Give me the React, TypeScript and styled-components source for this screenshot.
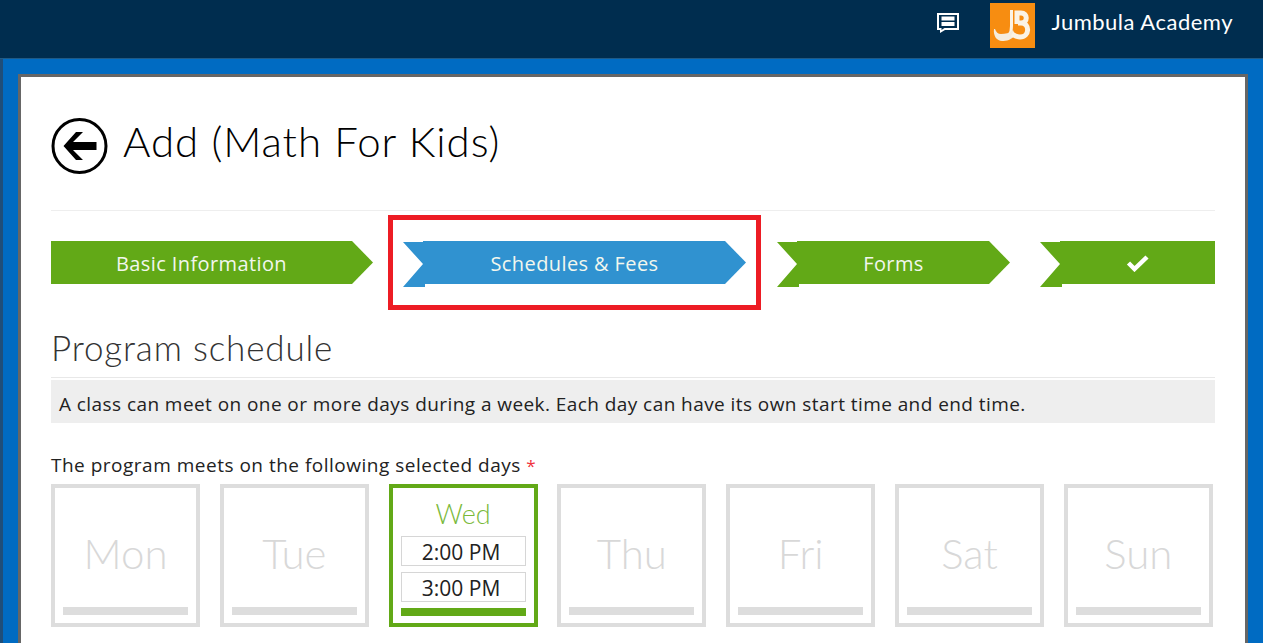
import React from "react";
import styled, { createGlobalStyle } from "styled-components";

const Global = createGlobalStyle`
  html, body { margin: 0; padding: 0; height: 643px; overflow: hidden; background: #006bc2; }
  * { box-sizing: border-box; }
  body { font-family: "Open Sans", "Liberation Sans", sans-serif; color: #222; }
`;
const Page = styled.div`
  width: 1263px;
  height: 643px;
  overflow: hidden;
  display: flex;
  flex-direction: column;
`;
const TopBar = styled.header`
  height: 59px;
  flex: none;
  background: #002d4f;
  border-bottom: 1px solid #1f5a86;
  display: flex;
  align-items: flex-start;
  justify-content: flex-end;
  padding: 3px 30px 0 0;
`;
const ChatButton = styled.span`
  display: flex;
  width: 24px;
  height: 24px;
  margin: 8px 30px 0 0;
`;
const Logo = styled.span`
  display: block;
  width: 45px;
  height: 45px;
  margin-right: 16px;
`;
const Academy = styled.span`
  font-family: Lato, sans-serif;
  font-size: 22px;
  line-height: 38px;
  color: #fff;
  letter-spacing: 0.5px;
`;
const Body = styled.main`
  flex: 1;
  background: #006bc2;
  border-left: 3px solid #1f4e79;
  padding: 15px 15px 0 15px;
  min-height: 0;
`;
const Panel = styled.section`
  background: #fff;
  border: 3px solid #666;
  border-bottom: 0;
  height: 600px;
  padding: 0 30px;
`;
const TitleRow = styled.div`
  display: flex;
  align-items: center;
  gap: 14px;
  height: 134px;
  border-bottom: 1px solid #eee;
`;
const BackIcon = styled.svg`
  width: 58px;
  height: 58px;
  flex: none;
  margin-top: 5px;
`;
const Title = styled.h1`
  margin: 0 0 5px;
  font-family: Lato, sans-serif;
  font-weight: 300;
  font-size: 42px;
  line-height: 48px;
  color: #000;
  letter-spacing: 0.93px;
`;
const Steps = styled.div`
  position: relative;
  display: flex;
  margin-top: 30px;
  height: 46px;
`;
const Highlight = styled.div`
  position: absolute;
  left: 337px;
  top: -26px;
  width: 373px;
  height: 95px;
  border: 5px solid #ed1c24;
`;
const Step = styled.div<{ $w: number; $ml: number; $tone: string; $tail?: boolean; $tip?: boolean }>`
  position: relative;
  width: ${(p) => p.$w}px;
  margin-left: ${(p) => p.$ml}px;
  height: 43px;
  padding-left: ${(p) => (p.$tail ? 21 : 0)}px;
  padding-right: ${(p) => (p.$tip ? 21 : 0)}px;
  color: #f2f7ee;
  font-size: 20px;
  letter-spacing: 0.4px;
  line-height: 45px;
  text-align: center;
  z-index: 0;
  &::before {
    content: "";
    position: absolute;
    inset: 0;
    z-index: -1;
    background: ${(p) => p.$tone};
    clip-path: polygon(
      ${(p) => (p.$tail ? "20px 0" : "0 0")},
      ${(p) => (p.$tip ? "calc(100% - 21px) 0, 100% 50%, calc(100% - 21px) 100%" : "100% 0, 100% 100%")},
      ${(p) => (p.$tail ? "20px 100%" : "0 100%")}
    );
  }
  &::after {
    content: ${(p) => (p.$tail ? '""' : "none")};
    position: absolute;
    left: 0;
    top: 1px;
    width: 22px;
    height: 45px;
    z-index: -1;
    background: ${(p) => p.$tone};
    clip-path: polygon(0 0, 20px 22px, 0 100%, 22px 100%, 22px 0);
  }
`;
const CheckIcon = styled.svg`
  width: 24px;
  height: 18px;
  vertical-align: -1px;
`;
const Heading = styled.h2`
  margin: 38px 0 0;
  padding-bottom: 8px;
  font-family: Lato, sans-serif;
  font-weight: 300;
  font-size: 35px;
  line-height: 44px;
  color: #333;
  letter-spacing: 0.85px;
  border-bottom: 1px solid #e8e8e8;
`;
const Note = styled.p`
  margin: 2px 0 0;
  height: 43px;
  background: #eee;
  font-size: 19px;
  letter-spacing: 0.43px;
  line-height: 48px;
  padding-left: 8px;
  color: #222;
`;
const FieldLabel = styled.div`
  margin-top: 29px;
  font-size: 19px;
  letter-spacing: 0.5px;
  line-height: 26px;
  height: 32px;
  color: #222;
`;
const Required = styled.span`
  color: #f0323c;
  font-size: 17px;
`;
const Days = styled.div`
  display: grid;
  grid-template-columns: repeat(7, 149px);
  column-gap: 19.8px;
`;
const Day = styled.div<{ $on?: boolean }>`
  height: 143px;
  border: 4px solid ${(p) => (p.$on ? "#62a917" : "#ddd")};
  padding: 8px;
  display: flex;
  flex-direction: column;
  justify-content: ${(p) => (p.$on ? "flex-start" : "flex-end")};
`;
const DayName = styled.div<{ $on?: boolean }>`
  font-family: Lato, sans-serif;
  font-weight: 300;
  text-align: center;
  flex: ${(p) => (p.$on ? "none" : 1)};
  min-height: 0;
  color: ${(p) => (p.$on ? "#7ab93a" : "#d8d8d8")};
  font-size: ${(p) => (p.$on ? 27 : 42)}px;
  line-height: ${(p) => (p.$on ? "36px" : "114px")};
  height: ${(p) => (p.$on ? "40px" : "auto")};
`;
const TimeBox = styled.div`
  height: 30px;
  border: 1px solid #d6d6d6;
  margin-bottom: 6px;
  padding-right: 4px;
  text-align: center;
  font-size: 21px;
  line-height: 31px;
  color: #222;
`;
const DayBar = styled.div<{ $on?: boolean }>`
  height: 8px;
  flex: none;
  margin-top: auto;
  background: ${(p) => (p.$on ? "#62a917" : "#ddd")};
`;

const green = "#62a917";
const blue = "#3092d0";

export default function App() {
  const days = ["Mon", "Tue", "Wed", "Thu", "Fri", "Sat", "Sun"];
  return (
    <Page>
      <Global />
      <TopBar>
        <ChatButton>
          <svg width="24" height="24" viewBox="0 0 24 24">
            <path fill="#fff" d="M1 2h22v17H9l-5 3v-3H1z" />
            <path fill="#002d4f" d="M3 4h18v13H8.500l-3 2v-2H3z" />
            <path fill="#fff" d="M5.500 5.500h13v4h-13zM5.500 11h13v4h-13z" />
          </svg>
        </ChatButton>
        <Logo>
          <svg width="45" height="45" viewBox="0 0 45 45">
            <rect width="45" height="45" fill="#f78d11" />
            <path fill="none" stroke="#fbf3e4" strokeWidth="3" d="M21.500 7v16c0 8-4 12-9 12" />
            <path fill="#f5ecdc" d="M5 26c1 3 3 5 6 5 4 0 9-1 12-4l2 5c-3 5-9 6-13 6-5 0-9-5-8-12z" />
            <path fill="none" stroke="#fbf3e4" strokeWidth="5" d="M27 21V10h4c7 0 7 10 0 10h-3m3 0c9 0 9 14-1 14c-4 0-6-2-8-3" />
          </svg>
        </Logo>
        <Academy>Jumbula Academy</Academy>
      </TopBar>
      <Body>
        <Panel>
          <TitleRow>
            <BackIcon viewBox="0 0 58 58">
              <circle cx="28.500" cy="29" r="26.500" fill="none" stroke="#000" strokeWidth="3" />
              <path fill="#000" d="M12.500 29L25 15h7L22 25h23.500v8H22l10 10h-7z" />
            </BackIcon>
            <Title>Add (Math For Kids)</Title>
          </TitleRow>
          <Steps>
            <Step $w={322} $ml={0} $tone={green} $tip>Basic Information</Step>
            <Step $w={343} $ml={30} $tone={blue} $tail $tip>Schedules &amp; Fees</Step>
            <Step $w={233} $ml={31} $tone={green} $tail $tip>Forms</Step>
            <Step $w={175} $ml={30} $tone={green} $tail>
              <CheckIcon viewBox="0 0 24 18">
                <path fill="none" stroke="#fff" strokeWidth="4.500" d="M2.500 9l6 6L21 3" />
              </CheckIcon>
            </Step>
            <Highlight />
          </Steps>
          <Heading>Program schedule</Heading>
          <Note>A class can meet on one or more days during a week. Each day can have its own start time and end time.</Note>
          <FieldLabel>The program meets on the following selected days <Required>*</Required></FieldLabel>
          <Days>
            {days.map((d) =>
              d === "Wed" ? (
                <Day key={d} $on>
                  <DayName $on>{d}</DayName>
                  <TimeBox>2:00 PM</TimeBox>
                  <TimeBox>3:00 PM</TimeBox>
                  <DayBar $on />
                </Day>
              ) : (
                <Day key={d}>
                  <DayName>{d}</DayName>
                  <DayBar />
                </Day>
              )
            )}
          </Days>
        </Panel>
      </Body>
    </Page>
  );
}
